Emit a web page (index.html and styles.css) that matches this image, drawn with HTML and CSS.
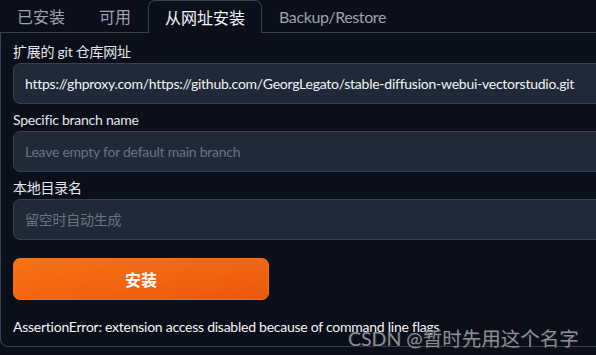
FILE: index.html
```html
<!doctype html>
<html>

<head>
    <meta charset="utf-8">
    <title>从网址安装</title>
    <link rel="stylesheet" href="styles.css">
</head>

<body>
    <div class="tabs">
        <span class="tab">已安装</span>
        <span class="tab">可用</span>
        <span class="tab active">从网址安装</span>
        <span class="tab latin">Backup/Restore</span>
        <span class="tab-rest"></span>
    </div>
    <div class="panel">
        <div class="field">
            <label>扩展的 git 仓库网址</label>
            <div class="input">https://ghproxy.com/https://github.com/GeorgLegato/stable-diffusion-webui-vectorstudio.git</div>
        </div>
        <div class="field">
            <label>Specific branch name</label>
            <div class="input placeholder">Leave empty for default main branch</div>
        </div>
        <div class="field">
            <label>本地目录名</label>
            <div class="input placeholder">留空时自动生成</div>
        </div>
        <button class="btn">安装</button>
        <p class="error">AssertionError: extension access disabled because of command line flags</p>
    </div>
    <div class="watermark">CSDN @暂时先用这个名字</div>
</body>

</html>
```

FILE: styles.css
```css
body {
    margin: 0;
    background: #0b0f19;
    color: #e5e7eb;
    font-family: Lato, "Noto Sans CJK SC", sans-serif;
    font-size: 14px;
    letter-spacing: -0.25px;
    overflow: hidden;
}
.tabs {
    display: flex;
    height: 33px;
    align-items: stretch;
}
.tab {
    padding: 0 17px;
    font-size: 16px;
    line-height: 34px;
    letter-spacing: 0;
    color: #9ca3af;
    border-bottom: 1px solid #374151;
}
.tab.latin {
    letter-spacing: -0.4px;
}
.tab.active {
    color: #f3f4f6;
    border: 1px solid #374151;
    border-bottom: none;
    border-radius: 7px 7px 0 0;
    padding: 0 16px;
}
.tab-rest {
    flex: 1;
    border-bottom: 1px solid #374151;
}
.panel {
    width: 620px;
    height: 314px;
    box-sizing: border-box;
    border: 1px solid #374151;
    border-top: none;
    border-radius: 0 0 8px 8px;
    padding: 9px 12px 0;
}
.field {
    margin-bottom: 6px;
}
.field label {
    display: block;
    line-height: 20px;
    margin-bottom: 1px;
}
.input {
    height: 41px;
    box-sizing: border-box;
    line-height: 39px;
    padding: 0 11px;
    background: #1f2937;
    border: 1px solid #374151;
    border-radius: 7px;
    white-space: nowrap;
    color: #f3f4f6;
}
.placeholder {
    color: #6b7280;
}
.btn {
    display: block;
    width: 256px;
    height: 42px;
    margin-top: 18px;
    border: 1px solid #f97316;
    border-radius: 7px;
    background: linear-gradient(to bottom right, #f97316, #ea580c);
    color: white;
    font-family: inherit;
    font-size: 16px;
    font-weight: bold;
}
.error {
    margin: 17px 0 0;
    line-height: 20px;
    color: #f3f4f6;
}
.watermark {
    position: absolute;
    left: 348px;
    top: 323px;
    font-size: 19.5px;
    letter-spacing: 0;
    color: #8b8f96;
    text-shadow: 1px 1px 1px #222;
}
```
